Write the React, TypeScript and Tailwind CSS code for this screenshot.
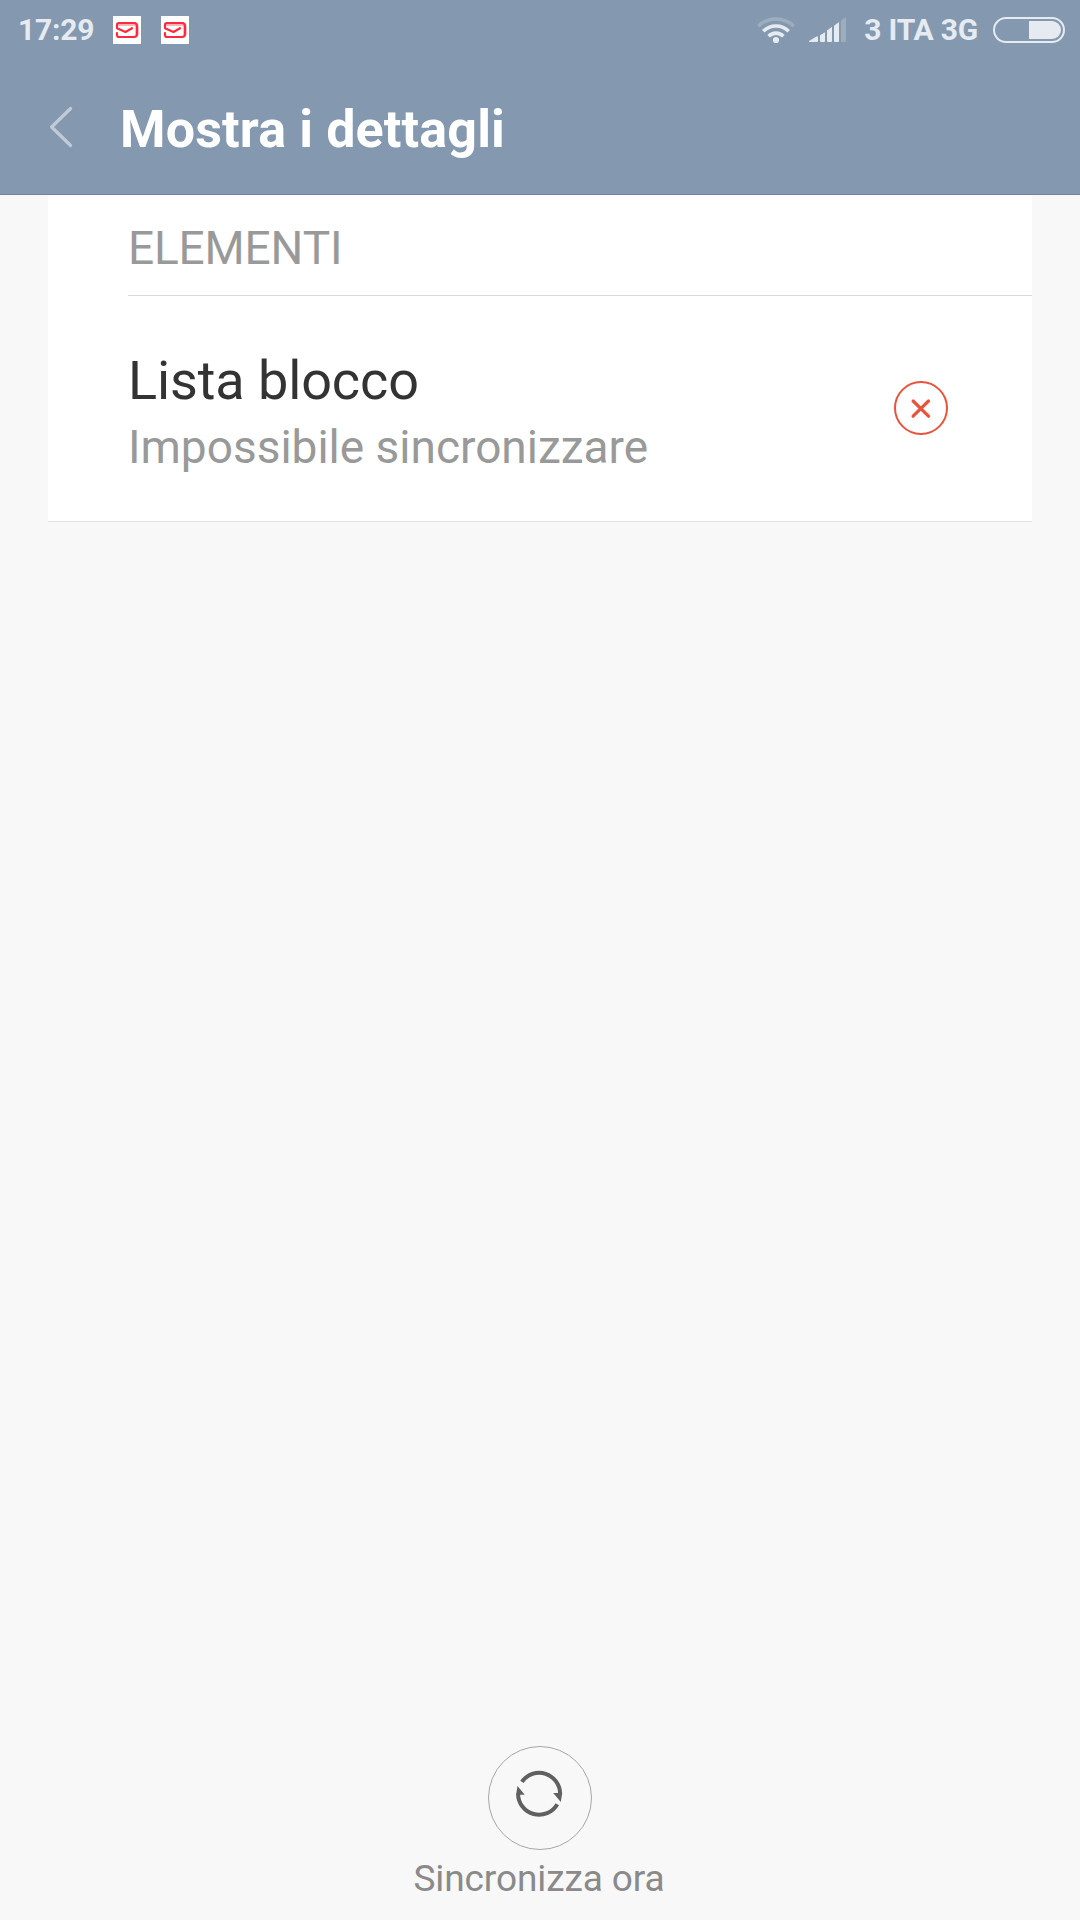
function MailIcon() {
  return (
    <svg className="size-7 bg-white" viewBox="0 0 28 28" fill="none" stroke="#ff2a3c" strokeWidth="2.2" strokeLinecap="round" strokeLinejoin="round">
      <path d="M6 8.2h15q3 0 3 3v7" stroke="#ffb3ba" strokeWidth="3.4" />
      <path d="M4 11.5V9q0-2 2-2h15q3 0 3 3v8q0 3-3 3H6q-2 0-2-2v-2" />
      <path d="M4 12.2l8.5 3.8L19 12.2" />
    </svg>
  );
}

function WifiIcon() {
  return (
    <svg className="h-7 w-10" viewBox="0 0 40 28" fill="none" strokeWidth="3.6">
      <path d="M2.2 10.2a25.5 25.5 0 0 1 35.6 0" stroke="#9cadbd" />
      <path d="M7.3 15.2a18 18 0 0 1 25.4 0" stroke="#e5ebf0" />
      <path d="M12.6 20.2a10.5 10.5 0 0 1 14.8 0" stroke="#e5ebf0" />
      <circle cx="20" cy="24" r="3.1" fill="#e5ebf0" />
    </svg>
  );
}

function SignalIcon() {
  return (
    <svg className="h-[26px] w-[38px]" viewBox="0 0 38 26" fill="#e5ebf0">
      <path d="M0 24l7.5-4.6q1.5-.5 1.5 1V24q0 1-1 1H0z" />
      <path d="M11 18.2l5-3V24q0 1-1 1h-3q-1 0-1-1z" />
      <path d="M18 13.5l5-3.7V24q0 1-1 1h-3q-1 0-1-1z" />
      <path d="M25 8.7L30 5v19q0 1-1 1h-3q-1 0-1-1z" />
      <path d="M32 3.5L37 0v24q0 1-1 1h-3q-1 0-1-1z" fill="#9cadbd" />
    </svg>
  );
}

function BatteryIcon() {
  return (
    <svg className="h-[26px] w-[72px]" viewBox="0 0 72 26">
      <rect x="1" y="1" width="70" height="24" rx="12" fill="none" stroke="#e5ebf0" strokeWidth="2" />
      <path d="M36 4h23a9 9 0 0 1 0 18H36z" fill="#e5ebf0" />
    </svg>
  );
}

function SyncIcon() {
  return (
    <svg className="size-[104px]" viewBox="0 0 104 104" fill="none">
      <circle cx="52" cy="52" r="51.5" stroke="#a6a6a6" />
      <path d="M33.9 35.8A21 21 0 0 1 72.1 48.2" stroke="#606060" strokeWidth="4" />
      <path d="M69.3 58.2A21 21 0 0 1 30.1 47.7" stroke="#606060" strokeWidth="4" />
      <path d="M65.2 47h9L72.8 56z" fill="#606060" />
      <path d="M29.5 40L36.7 48.8h-8.6z" fill="#606060" />
    </svg>
  );
}

export default function App() {
  return (
    <div className="flex h-[1920px] w-[1080px] flex-col bg-[#f8f8f8] font-[Roboto,sans-serif]">
      <header className="h-[195px] border-b border-[#6f819c] bg-[#8498af]">
        {/* Status bar */}
        <div className="flex h-[60px] items-center pl-[18px] pr-[15px] text-[30px] font-bold leading-[60px] text-[#e5ebf0]">
          <span className="w-[95px] tracking-[-0.2px]">17:29</span>
          <div className="flex gap-5">
            <MailIcon />
            <MailIcon />
          </div>
          <div className="ml-auto flex items-center">
            <WifiIcon />
            <div className="ml-[13px] mr-[17px]">
              <SignalIcon />
            </div>
            <span className="mr-[15px] tracking-[-0.2px]">3 ITA 3G</span>
            <BatteryIcon />
          </div>
        </div>

        {/* Title bar */}
        <div className="flex h-[134px] items-center pl-12">
          <svg className="h-[44px] w-[28px]" viewBox="0 0 28 44" fill="none" stroke="#c1cbd7" strokeWidth="3.2" strokeLinecap="round" strokeLinejoin="round">
            <path d="M22.6 3.5L3.6 22l19 18.5" />
          </svg>
          <h1 className="ml-11 pt-1.5 text-[52px] font-bold leading-[64px] tracking-[0.15px] text-white">Mostra i dettagli</h1>
        </div>
      </header>

      <main className="mx-12 h-[327px] border-b border-[#e2e2e2] bg-white pl-20">
        <h2 className="h-[101px] border-b border-[#d9d9d9] pt-[3px] text-[46px] leading-[100px] tracking-[-0.15px] text-[#999999]">ELEMENTI</h2>
        <div className="flex items-start justify-between pr-[84px]">
          <div className="pt-[53px]">
            <p className="text-[54px] leading-[64px] tracking-[-0.1px] text-[#333333]">Lista blocco</p>
            <p className="mt-[6px] text-[46px] leading-[56px] text-[#999999]">Impossibile sincronizzare</p>
          </div>
          <svg className="mt-[85px] size-[54px]" viewBox="0 0 54 54" fill="none" stroke="#e9533c">
            <circle cx="27" cy="27" r="26" strokeWidth="2" />
            <path d="M19.1 20L34.5 35.2M34.5 20L19.1 35.2" strokeWidth="3.2" strokeLinecap="round" />
          </svg>
        </div>
      </main>

      <footer className="mt-auto flex flex-col items-center pb-[17px]">
        <SyncIcon />
        <span className="mt-1 pr-0.5 text-[37px] leading-[49px] tracking-[-0.1px] text-[#8a8a8a]">Sincronizza ora</span>
      </footer>
    </div>
  );
}
